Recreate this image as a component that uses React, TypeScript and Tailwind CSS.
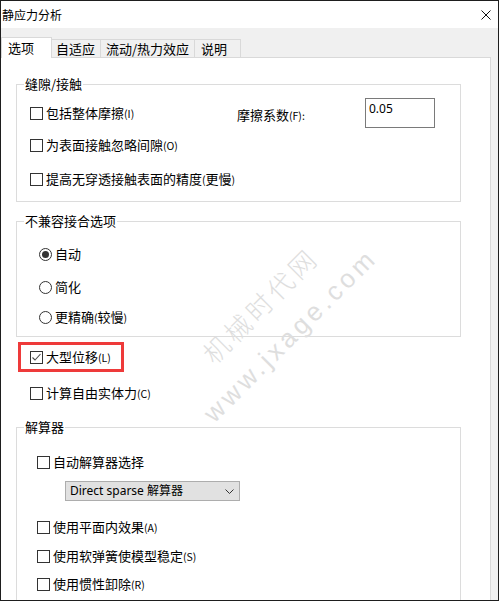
import React from "react";

function Check({ checked = false }: { checked?: boolean }) {
  return (
    <span className="w-[13px] h-[13px] border border-[#333333] bg-white shrink-0 flex items-center justify-center">
      {checked && (
        <svg width="11" height="11" viewBox="0 0 11 11">
          <path d="M1.5 5.5 L4 8 L9.5 2" stroke="#4a4a4a" strokeWidth="1.1" fill="none" />
        </svg>
      )}
    </span>
  );
}

function Radio({ checked = false }: { checked?: boolean }) {
  return (
    <span className="w-[13px] h-[13px] rounded-full border border-[#333333] bg-white shrink-0 flex items-center justify-center">
      {checked && <span className="w-[7px] h-[7px] rounded-full bg-[#333333]" />}
    </span>
  );
}

function Label({ text, suffix, inner }: { text: string; suffix?: string; inner?: string }) {
  return (
    <span className="text-[13px] leading-[18px] text-black whitespace-nowrap">
      {text}
      {inner ? (
        <>
          <span className="text-[10.5px]">(</span>
          {inner}
          <span className="text-[10.5px]">)</span>
        </>
      ) : null}
      {suffix && <span className="text-[10.5px]">{suffix}</span>}
    </span>
  );
}

function CheckRow({ text, suffix, inner, checked, className = "" }: { text: string; suffix?: string; inner?: string; checked?: boolean; className?: string }) {
  return (
    <div className={`h-[24px] flex items-center gap-[3px] ${className}`}>
      <Check checked={checked} />
      <Label text={text} suffix={suffix} inner={inner} />
    </div>
  );
}

function RadioRow({ text, suffix, inner, checked, className = "" }: { text: string; suffix?: string; inner?: string; checked?: boolean; className?: string }) {
  return (
    <div className={`h-[24px] flex items-center gap-[3px] ${className}`}>
      <Radio checked={checked} />
      <Label text={text} suffix={suffix} inner={inner} />
    </div>
  );
}

export default function App() {
  return (
    <div className="w-[499px] h-[601px] border border-[#1e1e1e] bg-[#f0f0f0] flex flex-col overflow-hidden font-['Noto_Sans_CJK_SC','Noto_Sans',sans-serif] text-black">
      {/* Title bar */}
      <div className="h-[27px] bg-white flex items-center justify-between pl-[1px] pr-[7px] shrink-0">
        <span className="text-[12px] leading-[16px]">静应力分析</span>
        <svg width="10" height="10" viewBox="0 0 10 10">
          <path d="M0.5 0.5 L9.5 9.5 M9.5 0.5 L0.5 9.5" stroke="#111" strokeWidth="1" />
        </svg>
      </div>

      {/* Tabs */}
      <div className="pt-[9px] shrink-0">
        <div className="h-[20px] flex items-end">
          <div className="relative z-10 w-[51px] h-[21px] -mb-[1px] bg-white border border-b-0 border-[#d9d9d9] pl-[6px] flex items-center">
            <span className="text-[13px] leading-[18px]">选项</span>
          </div>
          <div className="w-[49px] h-[18px] border-t border-r border-[#d9d9d9] bg-[#f0f0f0] flex items-center pl-[4px]">
            <span className="text-[13px] leading-[18px]">自适应</span>
          </div>
          <div className="w-[94px] h-[18px] border-t border-r border-[#d9d9d9] bg-[#f0f0f0] flex items-center pl-[5px]">
            <span className="text-[13px] leading-[18px]">流动/热力效应</span>
          </div>
          <div className="w-[46px] h-[18px] border-t border-r border-[#d9d9d9] bg-[#f0f0f0] flex items-center pl-[6px]">
            <span className="text-[13px] leading-[18px]">说明</span>
          </div>
        </div>
      </div>

      {/* Panel */}
      <div className="relative w-[490px] flex-1 min-h-0 bg-white border-t border-r border-[#d9d9d9] overflow-hidden pt-[17px]">
        {/* 缝隙/接触 */}
        <fieldset className="ml-[15px] w-[445px] border border-[#dcdcdc] pb-[10px]">
          <legend className="ml-[7px] px-[1px] text-[13px] leading-[18px]">缝隙/接触</legend>
          <div className="pl-[13px] pt-[8px] flex flex-col">
            <div className="h-[24px] flex items-center">
              <div className="w-[207px] flex items-center gap-[3px]">
                <Check />
                <Label text="包括整体摩擦" suffix="(I)" />
              </div>
              <div className="w-[128px]">
                <Label text="摩擦系数" suffix="(F):" />
              </div>
              <div className="w-[70px] h-[30px] border border-[#7a7a7a] bg-white pl-[3px] pt-[2px] font-['Noto_Sans',sans-serif] text-[12px] leading-[16px] shrink-0">
                0.05
              </div>
            </div>
            <CheckRow className="mt-[8px]" text="为表面接触忽略间隙" suffix="(O)" />
            <CheckRow className="mt-[10px]" text="提高无穿透接触表面的精度" inner="更慢" />
          </div>
        </fieldset>

        {/* 不兼容接合选项 */}
        <fieldset className="mt-[10px] ml-[15px] w-[445px] border border-[#dcdcdc] pb-[7px]">
          <legend className="ml-[7px] px-[1px] text-[13px] leading-[18px]">不兼容接合选项</legend>
          <div className="pl-[22px] pt-[12px] flex flex-col">
            <RadioRow checked text="自动" />
            <RadioRow className="mt-[9px]" text="简化" />
            <RadioRow className="mt-[6px]" text="更精确" inner="较慢" />
          </div>
        </fieldset>

        {/* 大型位移 highlighted */}
        <div className="mt-[5px] ml-[17px] w-[106px] h-[30px] border-[3px] border-[#ee3a3a] flex items-center pl-[9px]">
          <div className="flex items-center gap-[3px]">
            <Check checked />
            <Label text="大型位移" suffix="(L)" />
          </div>
        </div>

        <CheckRow className="mt-[9px] ml-[29px]" text="计算自由实体力" suffix="(C)" />

        {/* 解算器 */}
        <fieldset className="mt-[13px] ml-[15px] w-[445px] border border-[#dcdcdc] pb-[20px]">
          <legend className="ml-[7px] px-[1px] text-[13px] leading-[18px]">解算器</legend>
          <div className="pl-[20px] pt-[14px] flex flex-col">
            <CheckRow text="自动解算器选择" />
            <div className="mt-[7px] ml-[28px] w-[175px] h-[20px] bg-[#e1e1e1] border border-[#adadad] flex items-center justify-between pl-[4px] pr-[5px]">
              <span className="font-['Noto_Sans','Noto_Sans_CJK_SC',sans-serif] text-[12px] leading-[16px] whitespace-nowrap">
                Direct sparse 解算器
              </span>
              <svg width="9" height="5" viewBox="0 0 9 5">
                <path d="M0.5 0.5 L4.5 4.5 L8.5 0.5" stroke="#333" strokeWidth="1" fill="none" />
              </svg>
            </div>
            <CheckRow className="mt-[14px]" text="使用平面内效果" suffix="(A)" />
            <CheckRow className="mt-[5px]" text="使用软弹簧使模型稳定" suffix="(S)" />
            <CheckRow className="mt-[4px]" text="使用惯性卸除" suffix="(R)" />
          </div>
        </fieldset>

        {/* Watermark */}
        <div className="absolute left-[274px] top-[262px] -translate-x-1/2 -translate-y-1/2 rotate-[-45deg] pointer-events-none select-none text-[#dedede] text-center text-[26px] leading-[41px] whitespace-nowrap font-light">
          <span className="tracking-[4px]">机械时代网</span>
          <br />
          <span className="font-['Liberation_Sans',sans-serif] tracking-[4px]">www.jxage.com</span>
        </div>
      </div>
    </div>
  );
}
